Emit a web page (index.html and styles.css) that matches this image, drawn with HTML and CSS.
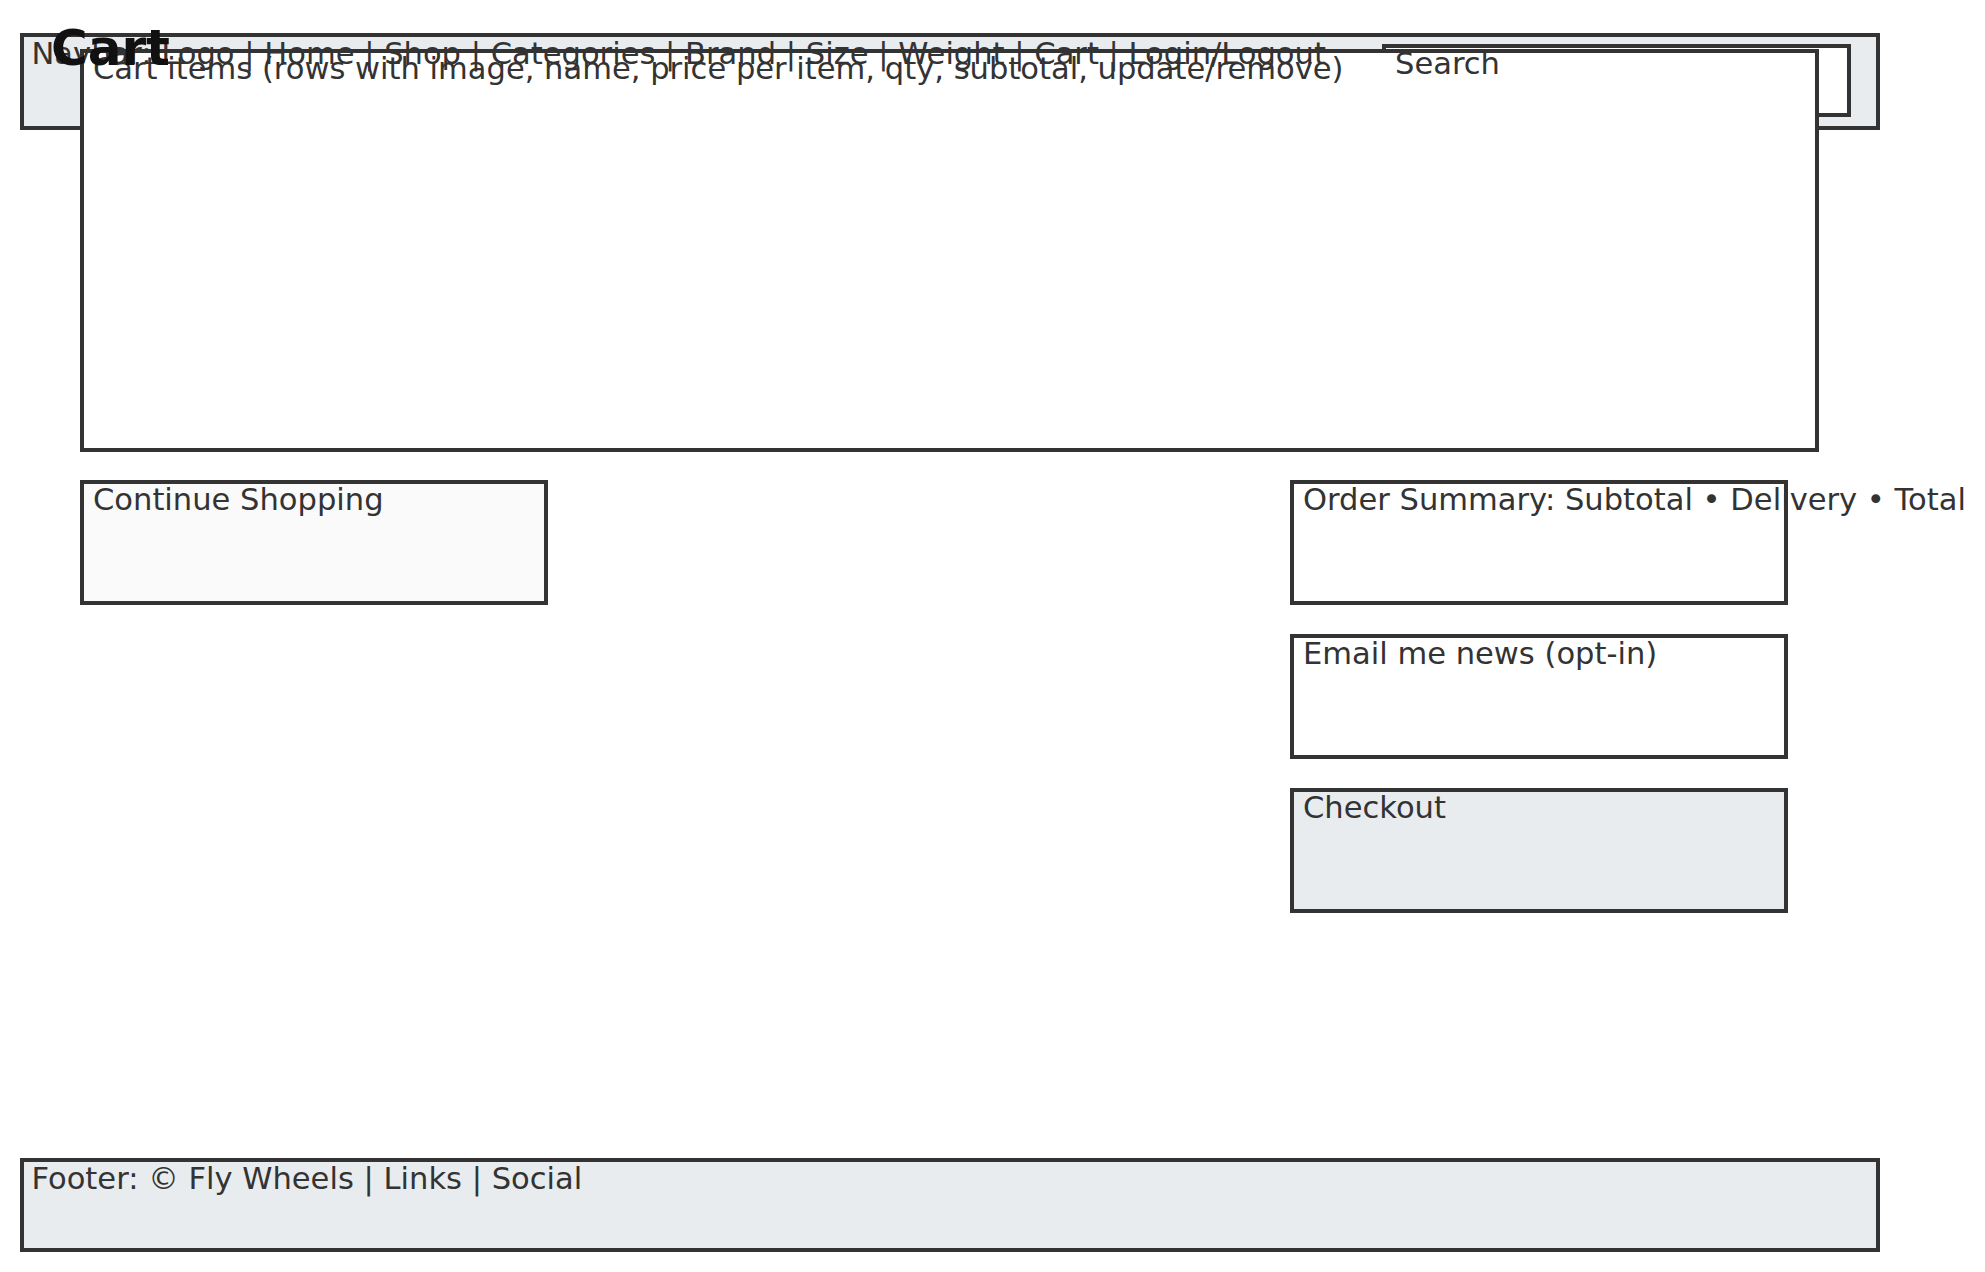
FILE: index.html
```html
<!DOCTYPE html>
<html lang="en">
<head>
<meta charset="utf-8">
<title>Cart</title>
<link rel="stylesheet" href="styles.css">
</head>
<body>
<div class="page">
  <h1 class="title">Cart</h1>
  <header class="nav">
    <span class="nav-text">Navbar: Logo | Home | Shop | Categories | Brand | Size | Weight | Cart | Login/Logout</span>
    <div class="search"><span class="search-label">Search</span></div>
  </header>
  <main class="main">
    <section class="box cart-items">Cart items (rows with image, name, price per item, qty, subtotal, update/remove)</section>
    <div class="lower">
      <div class="left-col">
        <div class="box continue">Continue Shopping</div>
      </div>
      <div class="right-col">
        <div class="box summary">Order Summary: Subtotal • Delivery • Total</div>
        <div class="box email">Email me news (opt-in)</div>
        <div class="box checkout">Checkout</div>
      </div>
    </div>
  </main>
  <footer class="footer">Footer: © Fly Wheels | Links | Social</footer>
</div>
</body>
</html>
```
FILE: styles.css
```css
* { box-sizing: border-box; }
html, body { margin: 0; padding: 0; background: #ffffff; }
body {
  font-family: "DejaVu Sans", "Liberation Sans", sans-serif;
  font-size: 30.55px;
  color: #333333;
}
.page {
  position: relative;
  min-height: 1272px;
  display: flex;
  flex-direction: column;
  padding: 33px 0 20px 20px;
}
.title {
  position: absolute;
  top: 19px;
  left: 51px;
  margin: 0;
  font-size: 50px;
  font-weight: bold;
  line-height: normal;
  color: #111111;
  z-index: 3;
}
.nav {
  width: 1860px;
  height: 97px;
  border: 4px solid #333333;
  background: #e9ecef;
  display: flex;
  justify-content: space-between;
  align-items: flex-start;
  padding: 0 25px 0 7.5px;
}
.nav-text {
  position: relative;
  z-index: 2;
  white-space: nowrap;
  line-height: normal;
  margin-top: -1px;
}
.search {
  width: 469px;
  height: 73px;
  margin-top: 7px;
  border: 4px solid #333333;
  background: #ffffff;
  padding: 0 9px;
  line-height: 33px;
}
.search-label {
  position: relative;
  z-index: 2;
  display: block;
  margin-top: -1px;
}
.main {
  margin-top: -81px;
  padding-left: 60px;
}
.box {
  border: 4px solid #333333;
  background: #ffffff;
  padding: 0 9px;
  line-height: 32px;
  white-space: nowrap;
}
.cart-items {
  position: relative;
  z-index: 1;
  width: 1739px;
  height: 403px;
}
.lower {
  margin-top: 28px;
  width: 1708px;
  display: grid;
  grid-template-columns: 468px 498px;
  justify-content: space-between;
  align-items: start;
}
.right-col {
  display: flex;
  flex-direction: column;
  gap: 29px;
}
.continue,
.summary,
.email,
.checkout {
  height: 125px;
}
.continue { background: #fafafa; }
.checkout { background: #e9ecef; }
.footer {
  margin-top: auto;
  width: 1860px;
  height: 94px;
  border: 4px solid #333333;
  background: #e9ecef;
  padding: 0 7.5px;
  line-height: 33px;
}
```
